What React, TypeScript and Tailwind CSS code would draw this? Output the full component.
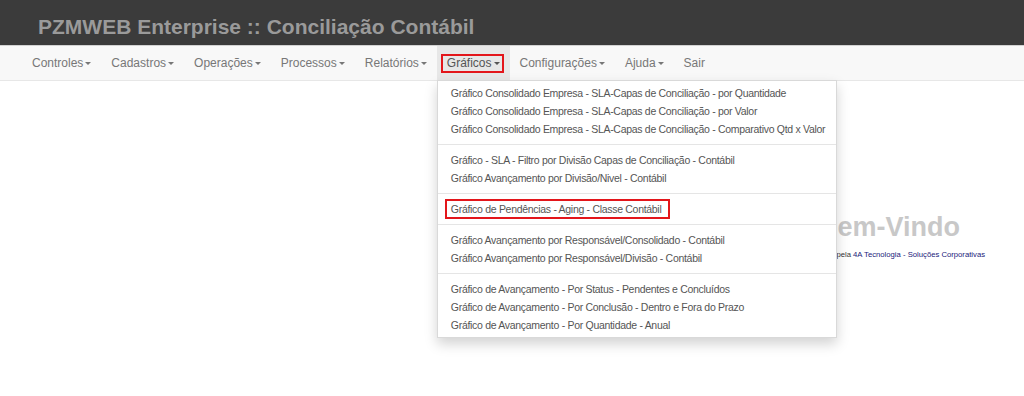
const menu = [
  "Controles",
  "Cadastros",
  "Operações",
  "Processos",
  "Relatórios",
  "Gráficos",
  "Configurações",
  "Ajuda",
  "Sair",
];

const groups = [
  [
    "Gráfico Consolidado Empresa - SLA-Capas de Conciliação - por Quantidade",
    "Gráfico Consolidado Empresa - SLA-Capas de Conciliação - por Valor",
    "Gráfico Consolidado Empresa - SLA-Capas de Conciliação - Comparativo Qtd x Valor",
  ],
  [
    "Gráfico - SLA - Filtro por Divisão Capas de Conciliação - Contábil",
    "Gráfico Avançamento por Divisão/Nivel - Contábil",
  ],
  ["Gráfico de Pendências - Aging - Classe Contábil"],
  [
    "Gráfico Avançamento por Responsável/Consolidado - Contábil",
    "Gráfico Avançamento por Responsável/Divisão - Contábil",
  ],
  [
    "Gráfico de Avançamento - Por Status - Pendentes e Concluídos",
    "Gráfico de Avançamento - Por Conclusão - Dentro e Fora do Prazo",
    "Gráfico de Avançamento - Por Quantidade - Anual",
  ],
];

const Caret = () => (
  <span className="inline-block ml-[2px] w-0 h-0 align-middle border-t-[3px] border-x-[3px] border-x-transparent border-t-current" />
);

const Dropdown = () => {
  return (
    <div className="absolute left-0 top-full z-10 w-[400px] py-[3px] bg-white border border-black/15 shadow-[0_6px_12px_rgba(0,0,0,0.175)]">
      {groups.map((group, gi) => (
        <div key={gi}>
          {gi > 0 && <div className="h-px my-[6px] bg-[#e5e5e5]" />}
          {group.map((item) => (
            <div
              key={item}
              className="relative pl-[13px] leading-[18px] text-[10.5px] tracking-[-0.3px] text-[#555] whitespace-nowrap"
            >
              {item}
              {item.startsWith("Gráfico de Pendências") && (
                <div className="absolute left-[7px] w-[225px] top-[-1px] bottom-[-1px] border-2 border-[#e3161b]" />
              )}
            </div>
          ))}
        </div>
      ))}
    </div>
  );
};

const App = () => {
  return (
    <div className="w-[1024px] h-[396px] bg-white font-['Liberation_Sans',Arial,sans-serif] overflow-hidden">
      <div className="h-[45px] bg-[#3b3b3b] pl-[38px] pt-[15px]">
        <p className="text-[21px] leading-[24px] font-bold text-[#9a9a9a]">
          PZMWEB Enterprise :: Conciliação Contábil
        </p>
      </div>

      <div className="h-[36px] bg-[#f8f8f8] border-t border-t-[#d2d2d2] border-b border-b-[#e7e7e7] pl-[22px] flex flex-row">
        {menu.map((label) => {
          const active = label === "Gráficos";
          return (
            <div
              key={label}
              className={
                "relative flex items-center px-[10px] text-[12px] " +
                (active ? "bg-[#e7e7e7] text-[#555]" : "text-[#777]")
              }
            >
              <span className="relative leading-[14px]">
                {label}
                {label !== "Sair" && <Caret />}
                {active && (
                  <span className="absolute left-[-6px] right-[-4px] top-[-2px] bottom-[-3px] border-2 border-[#e3161b]" />
                )}
              </span>
              {active && <Dropdown />}
            </div>
          );
        })}
      </div>

      <div className="flex flex-col items-end pr-[64px] pt-[131px]">
        <p className="text-[27px] leading-[31px] font-bold text-[#c8c8c8]">
          Seja Bem-Vindo
        </p>
        <p className="mt-[7px] mr-[-25px] text-[7.7px] leading-[10px] text-[#333]">
          Desenvolvido pela{" "}
          <span className="text-[#1a1a7a]">
            4A Tecnologia - Soluções Corporativas
          </span>
        </p>
      </div>
    </div>
  );
};

export default App;
